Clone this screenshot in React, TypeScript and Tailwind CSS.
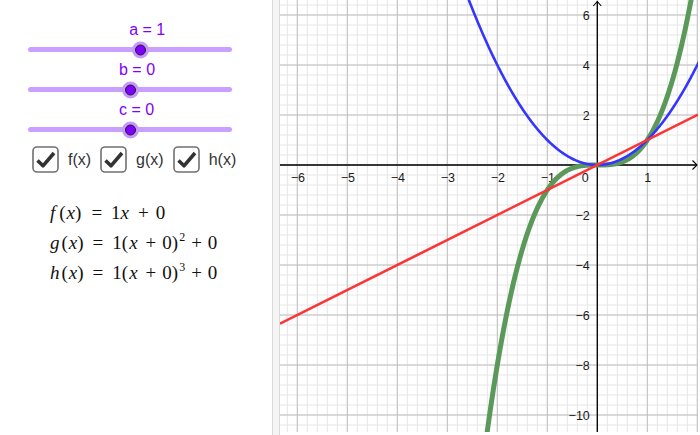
import React from 'react'

const MIN = -10
const MAX = 10
const TRACK_W = 204

const sliders = [
    { name: 'a', value: 1 },
    { name: 'b', value: 0 },
    { name: 'c', value: 0 },
]

function Slider({ name, value }: { name: string; value: number }) {
    const pos = 28 + ((value - MIN) / (MAX - MIN)) * TRACK_W
    return (
        <div className="flex flex-col">
            <div
                className="h-[15px] leading-[15px] text-[16px] text-[#7f00ff] whitespace-pre"
                style={{ marginLeft: pos - 11 }}
            >
                {name} = {value}
            </div>
            <div className="relative h-[25px] flex items-center">
                <div className="ml-[28px] w-[204px] h-[5px] rounded-full bg-[#c9a0ff]" />
                <div
                    className="absolute top-1/2 -translate-y-1/2 w-[17px] h-[17px] rounded-full bg-[#c39afb] flex items-center justify-center"
                    style={{ left: pos - 8.5 }}
                >
                    <div className="w-[11px] h-[11px] rounded-full bg-[#7f00ff] border border-[#1e1e1e]" />
                </div>
            </div>
        </div>
    )
}

function Check({ label }: { label: string }) {
    return (
        <div className="flex items-center gap-[9px]">
            <svg width="27" height="27" viewBox="0 0 27 27">
                <rect x="1" y="1" width="25" height="25" rx="4" fill="#fff" stroke="#707070" strokeWidth="1.6" />
                <polyline points="5.5,14.5 11,19.8 22,7" fill="none" stroke="#333" strokeWidth="3.6" strokeLinejoin="round" />
            </svg>
            <span className="text-[16px] text-[#333]">{label}</span>
        </div>
    )
}

function Formulas() {
    return (
        <div className="mt-[25px] pl-[50px] text-[19px] leading-[30px] text-[#111] font-['Liberation_Serif',serif]">
            <div className="flex h-[30px] whitespace-pre">
                <i>f</i>
                <span className="ml-[4px]">(</span>
                <i className="ml-[1px]">x</i>
                <span>)</span>
                <span className="ml-[10px]">=</span>
                <span className="ml-[9px]">1</span>
                <i>x</i>
                <span className="ml-[9px]">+</span>
                <span className="ml-[7px]">0</span>
            </div>
            <div className="flex h-[30px] whitespace-pre">
                <i>g</i>
                <span className="ml-[2px]">(</span>
                <i className="ml-[1px]">x</i>
                <span>)</span>
                <span className="ml-[9px]">=</span>
                <span className="ml-[9px]">1</span>
                <span>(</span>
                <i className="ml-[1px]">x</i>
                <span className="ml-[8px]">+</span>
                <span className="ml-[6px]">0</span>
                <span>)</span>
                <span className="relative -top-[6px] ml-[1px] text-[12px]">2</span>
                <span className="ml-[6px]">+</span>
                <span className="ml-[6px]">0</span>
            </div>
            <div className="flex h-[30px] whitespace-pre">
                <i>h</i>
                <span className="ml-[2px]">(</span>
                <i className="ml-[1px]">x</i>
                <span>)</span>
                <span className="ml-[9px]">=</span>
                <span className="ml-[9px]">1</span>
                <span>(</span>
                <i className="ml-[1px]">x</i>
                <span className="ml-[8px]">+</span>
                <span className="ml-[6px]">0</span>
                <span>)</span>
                <span className="relative -top-[6px] ml-[1px] text-[12px]">3</span>
                <span className="ml-[6px]">+</span>
                <span className="ml-[6px]">0</span>
            </div>
        </div>
    )
}

// graphics view: 50px per unit on x, 25px per unit on y
const W = 418
const H = 432
const X0 = 317.3
const Y0 = 165
const SX = 50
const SY = 25

const px = (u: number) => X0 + u * SX
const py = (v: number) => Y0 - v * SY

function curve(f: (u: number) => number, from: number, to: number) {
    const pts: string[] = []
    for (let u = from; u <= to; u += 0.01) {
        pts.push(`${px(u).toFixed(2)},${py(f(u)).toFixed(2)}`)
    }
    return 'M' + pts.join('L')
}

function Graph() {
    const minorV: number[] = []
    const minorH: number[] = []
    for (let x = X0 % 10; x <= W; x += 10) minorV.push(x)
    for (let y = Y0 % 10; y <= H; y += 10) minorH.push(y)
    const majorV = minorV.filter((x) => Math.abs(((x - X0) / 50) % 1) < 0.01)
    const majorH = minorH.filter((y) => Math.abs(((y - Y0) / 50) % 1) < 0.01)

    const xLabels = [-6, -5, -4, -3, -2, -1, 1]
    const yLabels = [6, 4, 2, -2, -4, -6, -8, -10]
    const fmt = (n: number) => (n < 0 ? '\u2212' + Math.abs(n) : String(n))

    return (
        <div className="w-[418px] h-[432px] bg-white overflow-hidden">
            <svg width={W} height={H} viewBox={`0 0 ${W} ${H}`} className="block">
                {minorV.map((x) => (
                    <line key={'mv' + x} x1={x} y1={0} x2={x} y2={H} stroke="#e6e6e6" strokeWidth="1" />
                ))}
                {minorH.map((y) => (
                    <line key={'mh' + y} x1={0} y1={y} x2={W} y2={y} stroke="#e6e6e6" strokeWidth="1" />
                ))}
                {majorV.map((x) => (
                    <line key={'Mv' + x} x1={x} y1={0} x2={x} y2={H} stroke="#c0c0c0" strokeWidth="1" />
                ))}
                {majorH.map((y) => (
                    <line key={'Mh' + y} x1={0} y1={y} x2={W} y2={y} stroke="#c0c0c0" strokeWidth="1" />
                ))}

                {/* axes */}
                <line x1={0} y1={Y0} x2={W - 1} y2={Y0} stroke="#000" strokeWidth="1.3" />
                <line x1={X0} y1={1.5} x2={X0} y2={H} stroke="#000" strokeWidth="1.3" />
                <polyline points={`${W - 5.5},${Y0 - 4.5} ${W - 1},${Y0} ${W - 5.5},${Y0 + 4.5}`} fill="none" stroke="#000" strokeWidth="1.1" />
                <polyline points={`${X0 - 4},${6} ${X0},${1.5} ${X0 + 4},${6}`} fill="none" stroke="#000" strokeWidth="1.1" />

                <g fontFamily="'Liberation Sans', Arial, sans-serif" fontSize="12.5" fill="#1a1a1a">
                    {xLabels.map((n) => (
                        <text key={'x' + n} x={px(n) + 0.5} y={Y0 + 17} textAnchor="middle">
                            {fmt(n)}
                        </text>
                    ))}
                    <text x={X0 - 12} y={Y0 + 17} textAnchor="middle">0</text>
                    {yLabels.map((n) => (
                        <text key={'y' + n} x={X0 - 7.5} y={py(n) + 4.5} textAnchor="end">
                            {fmt(n)}
                        </text>
                    ))}
                </g>

                {/* h, g, f */}
                <path d={curve((u) => u * u * u, -2.3, 1.95)} fill="none" stroke="#5a995a" strokeWidth="5" />
                <path d={curve((u) => u * u, -2.7, 2.1)} fill="none" stroke="#3535ff" strokeWidth="2.6" />
                <line x1={0} y1={py(-X0 / SX)} x2={W} y2={py((W - X0) / SX)} stroke="#ff3333" strokeWidth="2.6" />
            </svg>
        </div>
    )
}

export default function App() {
    return (
        <div className="w-[700px] h-[435px] flex bg-white overflow-hidden font-['Liberation_Sans',Arial,sans-serif]">
            <div className="w-[272px] h-full flex flex-col pt-[22px]">
                {sliders.map((s) => (
                    <Slider key={s.name} name={s.name} value={s.value} />
                ))}
                <div className="mt-[4px] ml-[32px] flex items-center gap-[9px]">
                    <Check label="f(x)" />
                    <Check label="g(x)" />
                    <Check label="h(x)" />
                </div>
                <Formulas />
            </div>
            <div className="w-[8px] h-full bg-[#f5f5f5] border-l border-r border-[#d9d9d9]" />
            <Graph />
        </div>
    )
}
